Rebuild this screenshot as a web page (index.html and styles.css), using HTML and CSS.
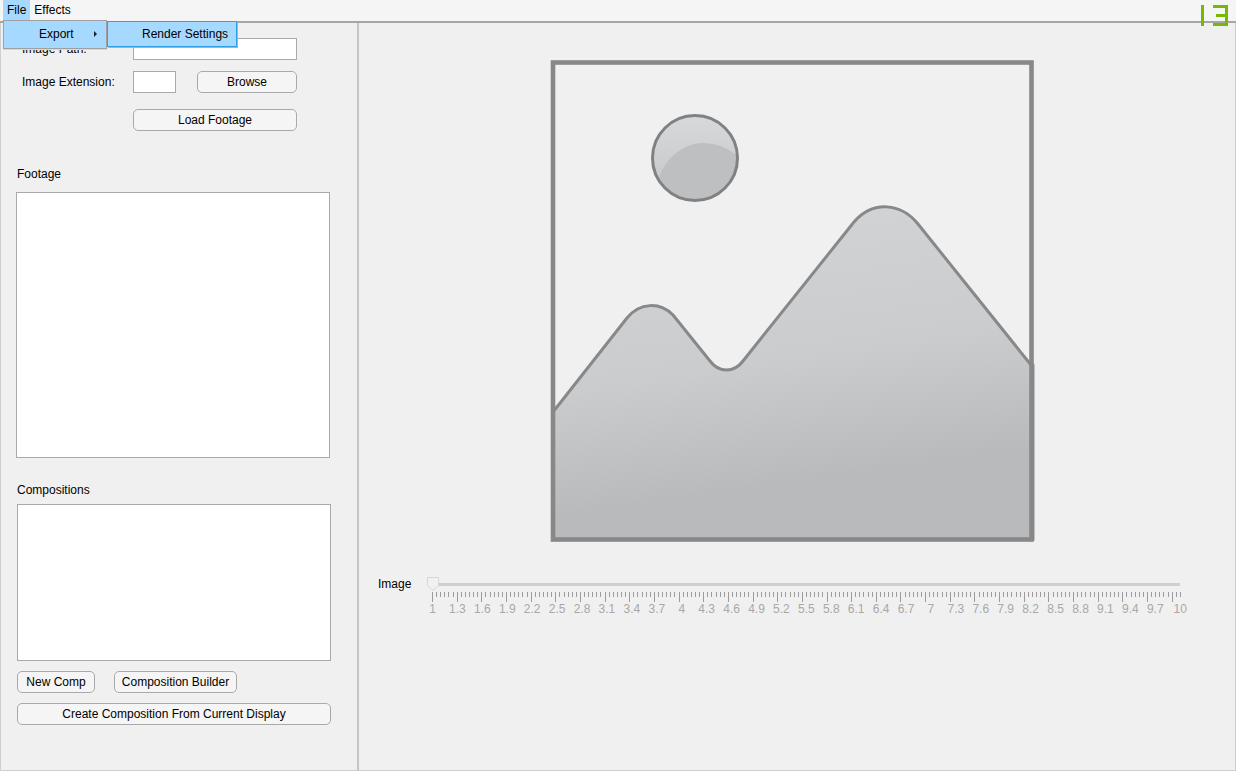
FILE: index.html
```html
<!DOCTYPE html>
<html lang="en">
<head>
<meta charset="utf-8">
<title>Image Viewer</title>
<link rel="stylesheet" href="styles.css">
</head>
<body>
<div class="app">
  <nav class="menubar">
    <span class="menu-title active">File</span>
    <span class="menu-title">Effects</span>
    <svg class="logo" viewBox="0 0 27 21" width="27" height="21" aria-hidden="true">
      <path d="M0 0h3v21H0zM12 0h15v21H12v-3h12v-6H15V9h9V3H12z" fill="#76b900"/>
    </svg>
    <div class="dropdown">
      <div class="menu-item"><span>Export</span><span class="arrow"></span></div>
      <div class="submenu"><span>Render Settings</span></div>
    </div>
  </nav>
  <main class="main">
    <aside class="left">
      <div class="form-grid">
        <label class="field-label">Image Path:</label>
        <div class="input wide"></div>
        <label class="field-label">Image Extension:</label>
        <div class="input"></div>
        <button class="btn browse">Browse</button>
        <button class="btn load">Load Footage</button>
      </div>
      <div class="section-label footage-label">Footage</div>
      <div class="list footage-list"></div>
      <div class="section-label comps-label">Compositions</div>
      <div class="list comps-list"></div>
      <div class="btn-row">
        <button class="btn new-comp">New Comp</button>
        <button class="btn builder">Composition Builder</button>
      </div>
      <button class="btn create">Create Composition From Current Display</button>
    </aside>
    <section class="right">
      <svg class="picture" viewBox="550 60 485 482" width="485" height="482" aria-hidden="true">
        <defs>
          <linearGradient id="mount" gradientUnits="userSpaceOnUse" x1="770" y1="205" x2="810" y2="480">
            <stop offset="0" stop-color="#d2d3d5"/>
            <stop offset="0.55" stop-color="#cbccce"/>
            <stop offset="1" stop-color="#b9babc"/>
          </linearGradient>
          <linearGradient id="sun" x1="0" y1="0" x2="0" y2="1">
            <stop offset="0" stop-color="#d8d9db"/>
            <stop offset="1" stop-color="#c4c5c7"/>
          </linearGradient>
          <clipPath id="sun-clip">
            <circle cx="695" cy="158" r="42.5"/>
          </clipPath>
        </defs>
        <path class="mountain" d="M553 412 L627 318 C640 302 660 302 673 315 L710 361 C719 373 734 373 743 361 L854 222 C873 200 901 203 918 224 L1031 365 H1033 V539.5 H553 Z"/>
        <rect class="frame" x="553" y="62.5" width="478.5" height="477"/>
        <circle cx="695" cy="158" r="42.5" fill="url(#sun)"/>
        <path d="M662 170 C672 152 688 143 703 143 C716 143 728 148 737 156 V205 H650 Z" fill="#bebfc1" clip-path="url(#sun-clip)"/>
        <circle class="sun-ring" cx="695" cy="158" r="42.5"/>
      </svg>
      <div class="slider-row">
        <span class="slider-label">Image</span>
        <div class="slider">
          <div class="track"></div>
          <svg class="thumb" viewBox="0 0 12 14" width="12" height="14" aria-hidden="true">
            <path d="M.5.5h11v8L6 13.5.5 8.5z" fill="#f1f1f1" stroke="#d6d6d6"/>
          </svg>
          <div class="ticks"><i></i><i></i><i></i><i></i><i></i><i></i><i></i><i></i><i></i><i></i><i></i><i></i><i></i><i></i><i></i><i></i><i></i><i></i><i></i><i></i><i></i><i></i><i></i><i></i><i></i><i></i><i></i><i></i><i></i><i></i><i></i><i></i><i></i><i></i><i></i><i></i><i></i><i></i><i></i><i></i><i></i><i></i><i></i><i></i><i></i><i></i><i></i><i></i><i></i><i></i><i></i><i></i><i></i><i></i><i></i><i></i><i></i><i></i><i></i><i></i><i></i><i></i><i></i><i></i><i></i><i></i><i></i><i></i><i></i><i></i><i></i><i></i><i></i><i></i><i></i><i></i><i></i><i></i><i></i><i></i><i></i><i></i><i></i><i></i><i></i><i></i><i></i><i></i><i></i><i></i><i></i><i></i><i></i><i></i><i></i><i></i><i></i><i></i><i></i><i></i><i></i><i></i><i></i><i></i><i></i><i></i><i></i><i></i><i></i><i></i><i></i><i></i><i></i><i></i><i></i><i></i><i></i><i></i><i></i><i></i><i></i><i></i><i></i><i></i><i></i><i></i><i></i><i></i><i></i><i></i><i></i><i></i><i></i><i></i><i></i><i></i><i></i><i></i><i></i><i></i><i></i><i></i><i></i><i></i><i></i><i></i><i></i><i></i><i></i><i></i><i></i><i></i><i></i><i></i><i></i><i></i><i></i><i></i><i></i><i></i><i></i><i></i><i></i><i></i><i></i><i></i><i></i><i></i><i></i><i></i><i></i><i></i><i></i><i></i><i></i><i></i><i></i><i></i><i></i><i></i><i></i><i></i><i></i></div>
          <div class="tick-labels"><span>1</span><span>1.3</span><span>1.6</span><span>1.9</span><span>2.2</span><span>2.5</span><span>2.8</span><span>3.1</span><span>3.4</span><span>3.7</span><span>4</span><span>4.3</span><span>4.6</span><span>4.9</span><span>5.2</span><span>5.5</span><span>5.8</span><span>6.1</span><span>6.4</span><span>6.7</span><span>7</span><span>7.3</span><span>7.6</span><span>7.9</span><span>8.2</span><span>8.5</span><span>8.8</span><span>9.1</span><span>9.4</span><span>9.7</span><span>10</span></div>
        </div>
      </div>
    </section>
  </main>
</div>
</body>
</html>
```

FILE: styles.css
```css
* { box-sizing: border-box; }

html, body {
  margin: 0;
  padding: 0;
}

body {
  font: 12px/14px "Liberation Sans", Arial, sans-serif;
  color: #000;
  background: #f0f0f0;
}

.app {
  display: flex;
  flex-direction: column;
  width: 1236px;
  height: 771px;
  overflow: hidden;
}

/* Menu bar */
.menubar {
  position: relative;
  display: flex;
  flex: none;
  height: 23px;
  padding-left: 3px;
  background: #f5f5f5;
  border-bottom: 2px solid #a6a6a6;
}

.menu-title {
  height: 21px;
  padding: 3px 4px;
}

.menu-title.active { background: #a6d9ff; }

.logo {
  position: absolute;
  top: 5px;
  left: 1201px;
  z-index: 3;
}

.dropdown {
  position: absolute;
  top: 20px;
  left: 3px;
  z-index: 2;
  display: flex;
  align-items: flex-start;
}

.menu-item {
  display: flex;
  align-items: center;
  justify-content: space-between;
  width: 104px;
  height: 29px;
  padding: 0 9px 2px 35px;
  background: #a6d9ff;
  border: 1px solid #a0a0a0;
  box-shadow: 0 1px 0 #d8d8d8;
}

.arrow {
  width: 0;
  height: 0;
  border: 3px solid transparent;
  border-left: 3px solid #222;
  border-right-width: 0;
}

.submenu {
  display: flex;
  align-items: center;
  width: 130px;
  height: 26px;
  margin-top: 1px;
  padding-left: 34px;
  background: #a6d9ff;
  border: 1px solid #2f9fe6;
  box-shadow: 1px 1px 0 #b0b0b0;
}

/* Panels */
.main {
  display: flex;
  flex: 1;
  min-height: 0;
}

.left {
  flex: none;
  width: 359px;
  padding-top: 15px;
  background: #f0f0f0;
  border-left: 1px solid #cfcfcf;
  border-right: 2px solid #c4c4c4;
  border-bottom: 1px solid #cfcfcf;
}

.right {
  flex: 1;
  min-width: 0;
  background: #f0f0f0;
  border-right: 1px solid #cfcfcf;
  border-bottom: 1px solid #cfcfcf;
}

/* Form */
.form-grid {
  display: grid;
  grid-template-columns: 111px 43px 21px 100px;
  grid-auto-rows: 22px;
  row-gap: 11px;
  margin-left: 21px;
}

.field-label {
  align-self: center;
}

.input {
  background: #fff;
  border: 1px solid #a9a9a9;
}

.input.wide { grid-column: 2 / -1; }

.btn {
  display: block;
  height: 22px;
  padding: 0;
  font: inherit;
  color: #000;
  background: #f5f5f5;
  border: 1px solid #a9a9a9;
  border-radius: 5px;
}

.browse { grid-column: 4; }

.load {
  grid-column: 2 / -1;
  margin-top: 5px;
}

.section-label { margin-left: 16px; }

.footage-label { margin-top: 41px; }
.comps-label { margin-top: 25px; }

.list {
  background: #fff;
  border: 1px solid #a9a9a9;
}

.footage-list {
  width: 314px;
  height: 266px;
  margin: 11px 0 0 15px;
}

.comps-list {
  width: 314px;
  height: 157px;
  margin: 7px 0 0 16px;
}

.btn-row {
  display: flex;
  gap: 19px;
  margin: 10px 0 0 16px;
}

.new-comp { width: 78px; }
.builder { width: 123px; }

.create {
  width: 314px;
  margin: 10px 0 0 16px;
}

/* Picture and slider */
.picture {
  display: block;
  margin: 37px 0 0 191px;
  filter: blur(0.7px);
}

.mountain {
  fill: url(#mount);
  stroke: #87888a;
  stroke-width: 3;
  stroke-linejoin: round;
}

.frame {
  fill: none;
  stroke: #87888a;
  stroke-width: 4.6;
}

.sun-ring {
  fill: none;
  stroke: #808183;
  stroke-width: 3;
}

.slider-row {
  display: flex;
  margin: 35px 0 0 19px;
}

.slider-label {
  width: 54px;
}

.slider {
  position: relative;
  width: 749px;
  padding-top: 6px;
}

.track {
  height: 3px;
  margin-right: 1px;
  background: #cfcfcf;
}

.thumb {
  position: absolute;
  top: 0;
  left: -5px;
}

.ticks {
  display: flex;
  justify-content: space-between;
  align-items: flex-start;
  height: 10px;
  margin-top: 6px;
}

.ticks i {
  display: block;
  width: 1px;
  height: 5px;
  background: #9c9c9c;
}

.ticks i:nth-child(6n + 1) { height: 10px; }

.tick-labels {
  display: flex;
  justify-content: space-between;
  color: #a8a8a8;
}

.tick-labels span {
  display: flex;
  justify-content: center;
  width: 1px;
  white-space: nowrap;
}
```
